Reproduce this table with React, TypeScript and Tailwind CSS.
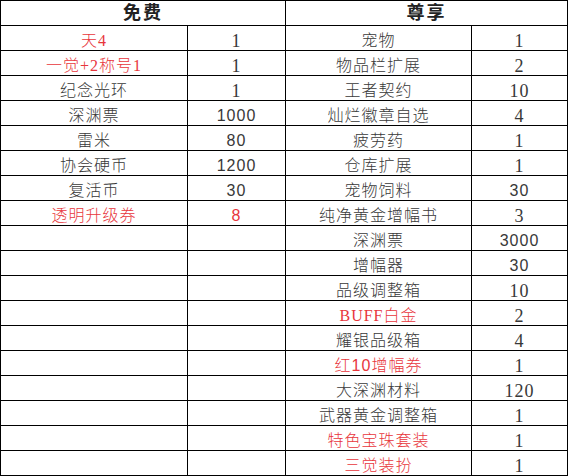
type Item = { name: string; qty: string; red?: boolean; redQty?: boolean; sansQty?: boolean }

const free: Item[] = [
  { name: '天4', qty: '1', red: true },
  { name: '一觉+2称号1', qty: '1', red: true },
  { name: '纪念光环', qty: '1' },
  { name: '深渊票', qty: '1000', sansQty: true },
  { name: '雷米', qty: '80', sansQty: true },
  { name: '协会硬币', qty: '1200', sansQty: true },
  { name: '复活币', qty: '30', sansQty: true },
  { name: '透明升级券', qty: '8', red: true, redQty: true, sansQty: true },
]

const premium: Item[] = [
  { name: '宠物', qty: '1' },
  { name: '物品栏扩展', qty: '2' },
  { name: '王者契约', qty: '10' },
  { name: '灿烂徽章自选', qty: '4' },
  { name: '疲劳药', qty: '1' },
  { name: '仓库扩展', qty: '1' },
  { name: '宠物饲料', qty: '30', sansQty: true },
  { name: '纯净黄金增幅书', qty: '3' },
  { name: '深渊票', qty: '3000', sansQty: true },
  { name: '增幅器', qty: '30', sansQty: true },
  { name: '品级调整箱', qty: '10' },
  { name: 'BUFF白金', qty: '2', red: true },
  { name: '耀银品级箱', qty: '4' },
  { name: '红10增幅券', qty: '1', red: true },
  { name: '大深渊材料', qty: '120' },
  { name: '武器黄金调整箱', qty: '1' },
  { name: '特色宝珠套装', qty: '1', red: true },
  { name: '三觉装扮', qty: '1', red: true },
]

const SERIF = "font-['Liberation_Serif','Noto_Sans_CJK_SC',serif]"
const SANS = "font-['Liberation_Sans','Noto_Sans_CJK_SC',sans-serif]"

function Cell({ text, red, sans, num }: { text?: string; red?: boolean; sans?: boolean; num?: boolean }) {
  const size = num && !sans ? 'text-[18px]' : 'text-[16px]'
  return (
    <div className="bg-white h-6 flex items-end justify-center pb-px">
      {text && (
        <span
          className={`${size} leading-4 font-light tracking-[1px] ${sans ? SANS : SERIF} ${red ? 'text-[#e8363c]' : 'text-[#383838]'}`}
        >
          {text}
        </span>
      )}
    </div>
  )
}

export default function App() {
  const rows = premium.map((p, i) => ({ f: free[i], p }))

  return (
    <div className="w-[569px] h-[476px] bg-white">
      <div className="w-[568px] grid grid-cols-[186px_97px_185px_95px] gap-px p-px bg-black">
        {/* Header */}
        <div className="col-span-2 bg-white h-6 flex items-center justify-center">
          <span className={`text-[18px] font-bold tracking-[2px] text-[#222] ${SERIF}`}>免费</span>
        </div>
        <div className="col-span-2 bg-white h-6 flex items-center justify-center">
          <span className={`text-[18px] font-bold tracking-[2px] text-[#222] ${SERIF}`}>尊享</span>
        </div>

        {rows.map(({ f, p }, i) => (
          <div key={i} className="contents">
            <Cell text={f?.name} red={f?.red} />
            <Cell text={f?.qty} red={f?.redQty} sans={f?.sansQty} num />
            <Cell text={p.name} red={p.red} sans={p.name.startsWith('红10')} />
            <Cell text={p.qty} sans={p.sansQty} num />
          </div>
        ))}
      </div>
    </div>
  )
}
